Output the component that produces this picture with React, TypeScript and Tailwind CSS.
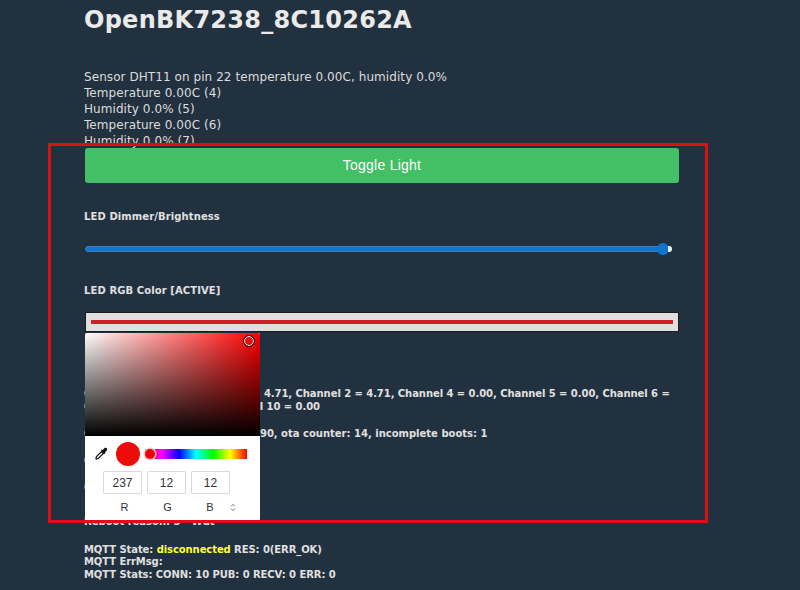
import React from 'react';

const font = { fontFamily: 'Verdana, "DejaVu Sans", sans-serif' };

function Eyedropper() {
  return (
    <svg width="13" height="13" viewBox="0 0 14 14" fill="none">
      <path d="M8.2 3.2 L10.4 1.2 C11 .7 11.9 .7 12.6 1.4 C13.3 2.1 13.3 3 12.8 3.6 L10.8 5.8 L11.4 6.6 L10.2 7.6 L6.4 3.8 L7.4 2.6 Z" fill="#111" />
      <path d="M7 5 L9 7 L3.6 12.4 L1.4 13 L1 12.6 L1.6 10.4 Z" fill="#fff" stroke="#111" strokeWidth="1.3" />
    </svg>
  );
}

function ColorPicker() {
  return (
    <div className="absolute left-[85px] top-[333px] w-[175px] h-[188px] bg-white rounded-[2px] overflow-hidden font-['Liberation_Sans',Arial,sans-serif]">
      <div className="relative h-[103px] bg-[#ff0000]">
        <div className="absolute inset-0 bg-gradient-to-r from-white to-transparent" />
        <div className="absolute inset-0 bg-gradient-to-b from-transparent to-black" />
        <div className="absolute left-[159px] top-[3px] w-[10px] h-[10px] rounded-full bg-[#ed0c0c] border-[1.5px] border-white outline outline-[1.5px] outline-black" />
      </div>
      <div className="flex items-center h-[35px]">
        <div className="ml-[10px] w-[13px] h-[13px]">
          <Eyedropper />
        </div>
        <div className="ml-[8px] w-[24px] h-[24px] rounded-full bg-[#ed0c0c]" />
        <div className="relative ml-[5px] w-[102px] h-[10px] [background-image:linear-gradient(to_right,#f00,#f0f,#00f,#0ff,#0f0,#ff0,#f00)]">
          <div className="absolute left-0 top-0 w-[10px] h-[10px] rounded-full bg-[#ee0000] shadow-[0_0_0_1.5px_#f4c8c8]" />
        </div>
      </div>
      <div className="flex gap-[5px] ml-[18px]">
        {['237', '12', '12'].map((v, i) => (
          <div
            key={i}
            className="w-[39px] h-[23px] border border-[#dadada] rounded-[1px] flex items-center justify-center text-[12px] text-[#333]"
          >
            {v}
          </div>
        ))}
      </div>
      <div className="relative flex ml-[18px] mt-[7px] text-[11px] leading-[13px] text-[#333]">
        <span className="w-[43px] text-center">R</span>
        <span className="w-[43px] text-center">G</span>
        <span className="w-[42px] text-center">B</span>
        <svg className="ml-[-1px] mt-[2px]" width="6" height="9" viewBox="0 0 6 9" fill="none" stroke="#555" strokeWidth="0.8">
          <path d="M1 3.4 L3 1.4 L5 3.4" />
          <path d="M1 5.6 L3 7.6 L5 5.6" />
        </svg>
      </div>
    </div>
  );
}

export default function App() {
  return (
    <div className="relative w-[800px] h-[590px] overflow-hidden bg-[#22313f] text-[#e0e0e0]" style={font}>
      <div className="ml-[84px] w-[595px]">
        <h1 className="h-[69px] pt-[5px] text-[24px] leading-[30px] tracking-[0.26px] font-bold text-[#eaeaea]">OpenBK7238_8C10262A</h1>
        <div className="h-[79px] overflow-hidden text-[12px] leading-[16px] tracking-[0.07px] text-[#dcdcdc]">
          Sensor DHT11 on pin 22 temperature 0.00C, humidity 0.0%
          <br />
          Temperature 0.00C (4)
          <br />
          Humidity 0.0% (5)
          <br />
          Temperature 0.00C (6)
          <br />
          Humidity 0.0% (7)
          <br />
          Temperature 0.00C (8)
        </div>
        <button className="block ml-[1px] w-[594px] h-[35px] rounded-[3px] bg-[#43c065] text-white text-[14px] tracking-[0.25px] font-['Liberation_Sans',Arial,sans-serif]">
          Toggle Light
        </button>
        <div className="mt-[27px] text-[10px] leading-[13px] tracking-[0.1px] font-bold">LED Dimmer/Brightness</div>
        <div className="flex items-center mt-[18px] ml-[1px] w-[587px] h-[16px]">
          <div className="relative w-full h-[6px] rounded-full bg-[#0f75cf] border border-[#3f7fb5]">
            <div className="absolute right-[2px] top-[-4px] w-[12px] h-[12px] rounded-full bg-[#0f75cf]" />
            <div className="absolute right-[-1px] top-[-1px] w-[4px] h-[6px] rounded-r-full bg-[#e6eef5]" />
          </div>
        </div>
        <div className="mt-[27px] text-[10px] leading-[13px] tracking-[0.1px] font-bold">LED RGB Color [ACTIVE]</div>
        <div className="mt-[15px] ml-[1px] w-[594px] h-[20px] bg-[#e0dfe0] border border-[#1c1c1c] flex items-center px-[5px]">
          <div className="w-full h-[4px] bg-[#cf2027]" />
        </div>
        <div className="mt-[56px] text-[10px] leading-[12.5px] tracking-[-0.06px] font-bold whitespace-nowrap">
          Channel 0 = 10.00, Channel 1 = 4.71, Channel 2 = 4.71, Channel 4 = 0.00, Channel 5 = 0.00, Channel 6 =
          <br />
          0.00, Channel 7 = 0.00, Channel 10 = 0.00
        </div>
        <div className="mt-[14.5px] text-[10px] leading-[12.5px] font-bold">
          Cfg sizes: 35840, OTA size: 12890, ota counter: 14, incomplete boots: 1
        </div>
        <div className="mt-[14.5px] text-[10px] leading-[12.5px] font-bold">Channel 1 state</div>
        <div className="mt-[14.5px] text-[10px] leading-[12.5px] font-bold">Channel 2 state</div>
        <div className="mt-[22px] text-[10px] leading-[12.5px] font-bold">Reboot reason: 3 - Wdt</div>
        <div className="mt-[15px] text-[10px] leading-[12.5px] tracking-[-0.08px] font-bold">
          MQTT State: <span className="text-[#ffff33]">disconnected</span> RES: 0(ERR_OK)
          <br />
          MQTT ErrMsg:
          <br />
          MQTT Stats: CONN: 10 PUB: 0 RECV: 0 ERR: 0
        </div>
      </div>
      <ColorPicker />
      {/* red annotation frame over the page */}
      <div className="absolute left-[48px] top-[143px] w-[660px] h-[380px] border-[3px] border-[#dc0f12] pointer-events-none" />
    </div>
  );
}
